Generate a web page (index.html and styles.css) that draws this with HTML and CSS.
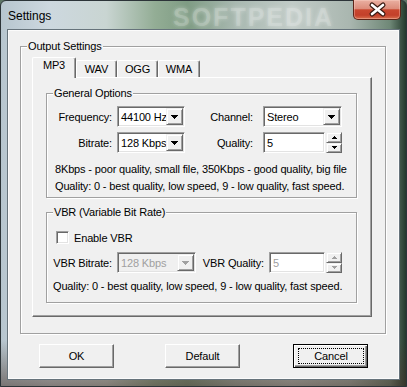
FILE: index.html
```html
<!DOCTYPE html>
<html lang="en">
<head>
    <meta charset="UTF-8">
    <title>Settings</title>
    <link rel="stylesheet" href="styles.css">
</head>
<body>
    <div class="window">
        <div class="titlebar">
            <span class="title">Settings</span>
            <span class="watermark">SOFTPEDIA</span>
            <div class="close">
                <svg width="46" height="19" viewBox="0 0 46 19">
                    <path d="M18 5 L29 14 M29 5 L18 14" stroke="#3a1a12" stroke-width="5" stroke-linecap="round"/>
                    <path d="M18 5 L29 14 M29 5 L18 14" stroke="#fff" stroke-width="2.6" stroke-linecap="round"/>
                </svg>
            </div>
        </div>

        <div class="client">
            <div class="group output">
                <div class="legend">Output Settings</div>

                <div class="tabs">
                    <div class="tab active">MP3</div>
                    <div class="tab t-wav">WAV</div>
                    <div class="tab t-ogg">OGG</div>
                    <div class="tab t-wma">WMA</div>
                </div>

                <div class="panel">
                    <div class="group general">
                        <div class="legend">General Options</div>

                        <div class="row first">
                            <span class="lbl">Frequency:</span>
                            <div class="combo w68">
                                <span class="val">44100 Hz</span>
                                <span class="arrow"><svg width="7" height="4" viewBox="0 0 7 4"><path d="M0 0h7v1H0zM1 1h5v1H1zM2 2h3v1H2zM3 3h1v1H3z" fill="#000"/></svg></span>
                            </div>
                            <span class="lbl2">Channel:</span>
                            <div class="combo w79">
                                <span class="val">Stereo</span>
                                <span class="arrow"><svg width="7" height="4" viewBox="0 0 7 4"><path d="M0 0h7v1H0zM1 1h5v1H1zM2 2h3v1H2zM3 3h1v1H3z" fill="#000"/></svg></span>
                            </div>
                        </div>

                        <div class="row">
                            <span class="lbl">Bitrate:</span>
                            <div class="combo w68">
                                <span class="val">128 Kbps</span>
                                <span class="arrow"><svg width="7" height="4" viewBox="0 0 7 4"><path d="M0 0h7v1H0zM1 1h5v1H1zM2 2h3v1H2zM3 3h1v1H3z" fill="#000"/></svg></span>
                            </div>
                            <span class="lbl2">Quality:</span>
                            <div class="edit w62"><span class="val">5</span></div>
                            <div class="spin">
                                <span class="spin-btn"><svg width="5" height="3" viewBox="0 0 5 3"><path d="M2 0h1v1H2zM1 1h3v1H1zM0 2h5v1H0z" fill="#000"/></svg></span>
                                <span class="spin-btn"><svg width="5" height="3" viewBox="0 0 5 3"><path d="M0 0h5v1H0zM1 1h3v1H1zM2 2h1v1H2z" fill="#000"/></svg></span>
                            </div>
                        </div>

                        <p class="note">8Kbps - poor quality, small file, 350Kbps - good quality, big file<br>Quality: 0 - best quality, low speed, 9 - low quality, fast speed.</p>
                    </div>

                    <div class="group vbr">
                        <div class="legend">VBR (Variable Bit Rate)</div>

                        <div class="check-row">
                            <span class="checkbox"></span>
                            <span>Enable VBR</span>
                        </div>

                        <div class="row vbr-row">
                            <span class="lbl">VBR Bitrate:</span>
                            <div class="combo w79 disabled">
                                <span class="val">128 Kbps</span>
                                <span class="arrow"><svg width="7" height="4" viewBox="0 0 7 4"><path d="M0 0h7v1H0zM1 1h5v1H1zM2 2h3v1H2zM3 3h1v1H3z" fill="#a0a0a0"/></svg></span>
                            </div>
                            <span class="lbl2 narrow">VBR Quality:</span>
                            <div class="edit w56 disabled"><span class="val">5</span></div>
                            <div class="spin">
                                <span class="spin-btn"><svg width="5" height="3" viewBox="0 0 5 3"><path d="M2 0h1v1H2zM1 1h3v1H1zM0 2h5v1H0z" fill="#a0a0a0"/></svg></span>
                                <span class="spin-btn"><svg width="5" height="3" viewBox="0 0 5 3"><path d="M0 0h5v1H0zM1 1h3v1H1zM2 2h1v1H2z" fill="#a0a0a0"/></svg></span>
                            </div>
                        </div>

                        <p class="note vbr-note">Quality: 0 - best quality, low speed, 9 - low quality, fast speed.</p>
                    </div>
                </div>
            </div>

            <div class="buttons">
                <button class="btn">OK</button>
                <button class="btn btn-default">Default</button>
                <button class="btn btn-cancel"><span class="focus">Cancel</span></button>
            </div>
        </div>
    </div>
</body>
</html>
```

FILE: styles.css
```css
* {
    margin: 0;
    padding: 0;
    box-sizing: border-box;
}

body {
    width: 407px;
    height: 387px;
    overflow: hidden;
    background: #5d7566;
    font-family: "Liberation Sans", Arial, sans-serif;
    font-size: 11px;
    letter-spacing: -0.15px;
    color: #000;
}

.window {
    width: 407px;
    height: 387px;
    display: flex;
    flex-direction: column;
    padding: 0 6px 6px;
    border: 1px solid #2c3438;
    border-radius: 6px 6px 0 0;
    background:
        linear-gradient(to bottom, rgba(0, 0, 0, 0) 88%, rgba(70, 50, 40, 0.55) 100%),
        linear-gradient(to right, #b7c6cf 0%, #cdd8df 12%, #c9d5d2 26%, #93ad95 38%, #7f9c84 46%, #a9b9b1 58%, #c1cbc7 72%, #aab7b0 86%, #6f8877 96%, #243a2c 100%);
}

/* title bar */

.titlebar {
    position: relative;
    height: 28px;
    display: flex;
    align-items: flex-start;
}

.title {
    margin: 8px 0 0 1px;
    font-size: 12px;
    line-height: 15px;
    letter-spacing: 0;
    color: #000;
}

.watermark {
    position: absolute;
    left: 166px;
    top: 2px;
    font-size: 25px;
    font-weight: bold;
    letter-spacing: 2px;
    color: rgba(255, 255, 255, 0.18);
    text-shadow: 0 0 4px rgba(255, 255, 255, 0.35);
}

.close {
    margin: -1px -1px 0 auto;
    width: 48px;
    height: 20px;
    border: 1px solid #5e2418;
    border-top: none;
    border-radius: 0 0 5px 5px;
    background: linear-gradient(to bottom, #eab0a2 0%, #dc8d7b 45%, #c9472f 52%, #c3402a 80%, #d8704e 100%);
    box-shadow: inset 0 0 0 1px rgba(255, 220, 210, 0.35);
}

.close svg {
    display: block;
}

/* client area */

.client {
    height: 351px;
    background: #f0f0f0;
    border: 1px solid #66737b;
    box-shadow: inset 0 0 0 1px #fbfbfb;
}

.group {
    border: 1px solid #a0a0a0;
    box-shadow: inset 1px 1px 0 #fff, 1px 1px 0 #fff;
}

.legend {
    width: fit-content;
    height: 13px;
    margin: -7px 0 0 6px;
    padding: 0 1px;
    line-height: 13px;
    white-space: nowrap;
    background: #f0f0f0;
}

.output {
    width: 366px;
    height: 288px;
    margin: 16px 0 0 12px;
}

/* tabs */

.tabs {
    position: relative;
    z-index: 1;
    display: flex;
    align-items: flex-end;
    height: 21px;
    margin: 4px 0 -1px 11px;
}

.tab {
    height: 17px;
    margin-bottom: 1px;
    line-height: 16px;
    text-align: center;
    background: #f0f0f0;
    border-top: 1px solid #fff;
    border-left: 1px solid #fff;
    border-right: 1px solid #696969;
    border-radius: 2px 2px 0 0;
    box-shadow: inset -1px 0 0 #a0a0a0;
}

.tab.active {
    width: 44px;
    height: 21px;
    margin-bottom: 0;
    line-height: 15px;
}

.t-wav { width: 41px; }
.t-ogg { width: 41px; }
.t-wma { width: 42px; }

.panel {
    width: 340px;
    height: 240px;
    margin-left: 11px;
    border-top: 1px solid #fff;
    border-left: 1px solid #fff;
    border-right: 1px solid #696969;
    border-bottom: 1px solid #696969;
    box-shadow: inset -1px -1px 0 #a0a0a0;
}

.general {
    width: 311px;
    height: 105px;
    margin: 15px 0 0 13px;
}

.vbr {
    width: 311px;
    height: 91px;
    margin: 14px 0 0 13px;
}

/* rows of controls */

.row {
    display: flex;
    align-items: center;
    height: 21px;
    margin-top: 5px;
}

.row.first {
    margin-top: 6px;
}

.lbl {
    width: 65px;
    margin-right: 5px;
    text-align: right;
    white-space: nowrap;
}

.lbl2 {
    width: 68px;
    margin-right: 10px;
    text-align: right;
    white-space: nowrap;
}

.lbl2.narrow {
    margin-right: 5px;
}

.combo,
.edit {
    display: flex;
    height: 21px;
    padding: 2px;
    background: #fff;
    border: 1px solid;
    border-color: #a0a0a0 #fff #fff #a0a0a0;
    box-shadow: inset 1px 1px 0 #696969, inset -1px -1px 0 #e3e3e3;
}

.w68 { width: 68px; }
.w79 { width: 79px; }
.w62 { width: 62px; }
.w56 { width: 56px; }

.val {
    flex: 1;
    min-width: 0;
    padding-left: 1px;
    line-height: 16px;
    white-space: nowrap;
    overflow: hidden;
}

.arrow {
    flex: none;
    width: 17px;
    height: 17px;
    margin: -1px -1px -1px 0;
    display: flex;
    align-items: center;
    justify-content: center;
    background: #f0f0f0;
    border: 1px solid;
    border-color: #f0f0f0 #696969 #696969 #f0f0f0;
    box-shadow: inset 1px 1px 0 #fff, inset -1px -1px 0 #a0a0a0;
}

.arrow svg,
.spin-btn svg {
    display: block;
}

.disabled {
    color: #a0a0a0;
}

.combo.disabled {
    background: #f0f0f0;
}

.spin {
    width: 16px;
    height: 21px;
    margin-left: 1px;
    display: flex;
    flex-direction: column;
}

.spin-btn {
    flex: 1;
    display: flex;
    align-items: center;
    justify-content: center;
    background: #f0f0f0;
    border: 1px solid;
    border-color: #f0f0f0 #696969 #696969 #f0f0f0;
    box-shadow: inset 1px 1px 0 #fff, inset -1px -1px 0 #a0a0a0;
}

.note {
    margin-top: 8px;
    padding-left: 8px;
    line-height: 17px;
    white-space: nowrap;
}

.vbr-note {
    margin-top: 5px;
    padding-left: 6px;
}

/* checkbox */

.check-row {
    display: flex;
    align-items: center;
    height: 13px;
    margin: 12px 0 0 9px;
}

.checkbox {
    width: 13px;
    height: 13px;
    margin-right: 5px;
    background: #fff;
    border: 1px solid;
    border-color: #a0a0a0 #fff #fff #a0a0a0;
    box-shadow: inset 1px 1px 0 #696969, inset -1px -1px 0 #e3e3e3;
}

.vbr-row {
    margin-top: 8px;
}

/* dialog buttons */

.buttons {
    display: flex;
    margin: 10px 0 0 31px;
}

.btn {
    width: 75px;
    height: 24px;
    font-family: inherit;
    font-size: 11px;
    letter-spacing: inherit;
    color: #000;
    background: #f0f0f0;
    border: 1px solid;
    border-color: #fff #696969 #696969 #fff;
    box-shadow: inset -1px -1px 0 #a0a0a0;
}

.btn-default {
    margin-left: 51px;
}

.btn-cancel {
    margin-left: 53px;
    padding: 3px 3px 3px 4px;
    border-color: #000;
    box-shadow: inset 1px 1px 0 #fff, inset -1px -1px 0 #696969, inset -2px -2px 0 #a0a0a0;
}

.focus {
    display: block;
    height: 100%;
    line-height: 14px;
    border: 1px dotted #000;
}
```
